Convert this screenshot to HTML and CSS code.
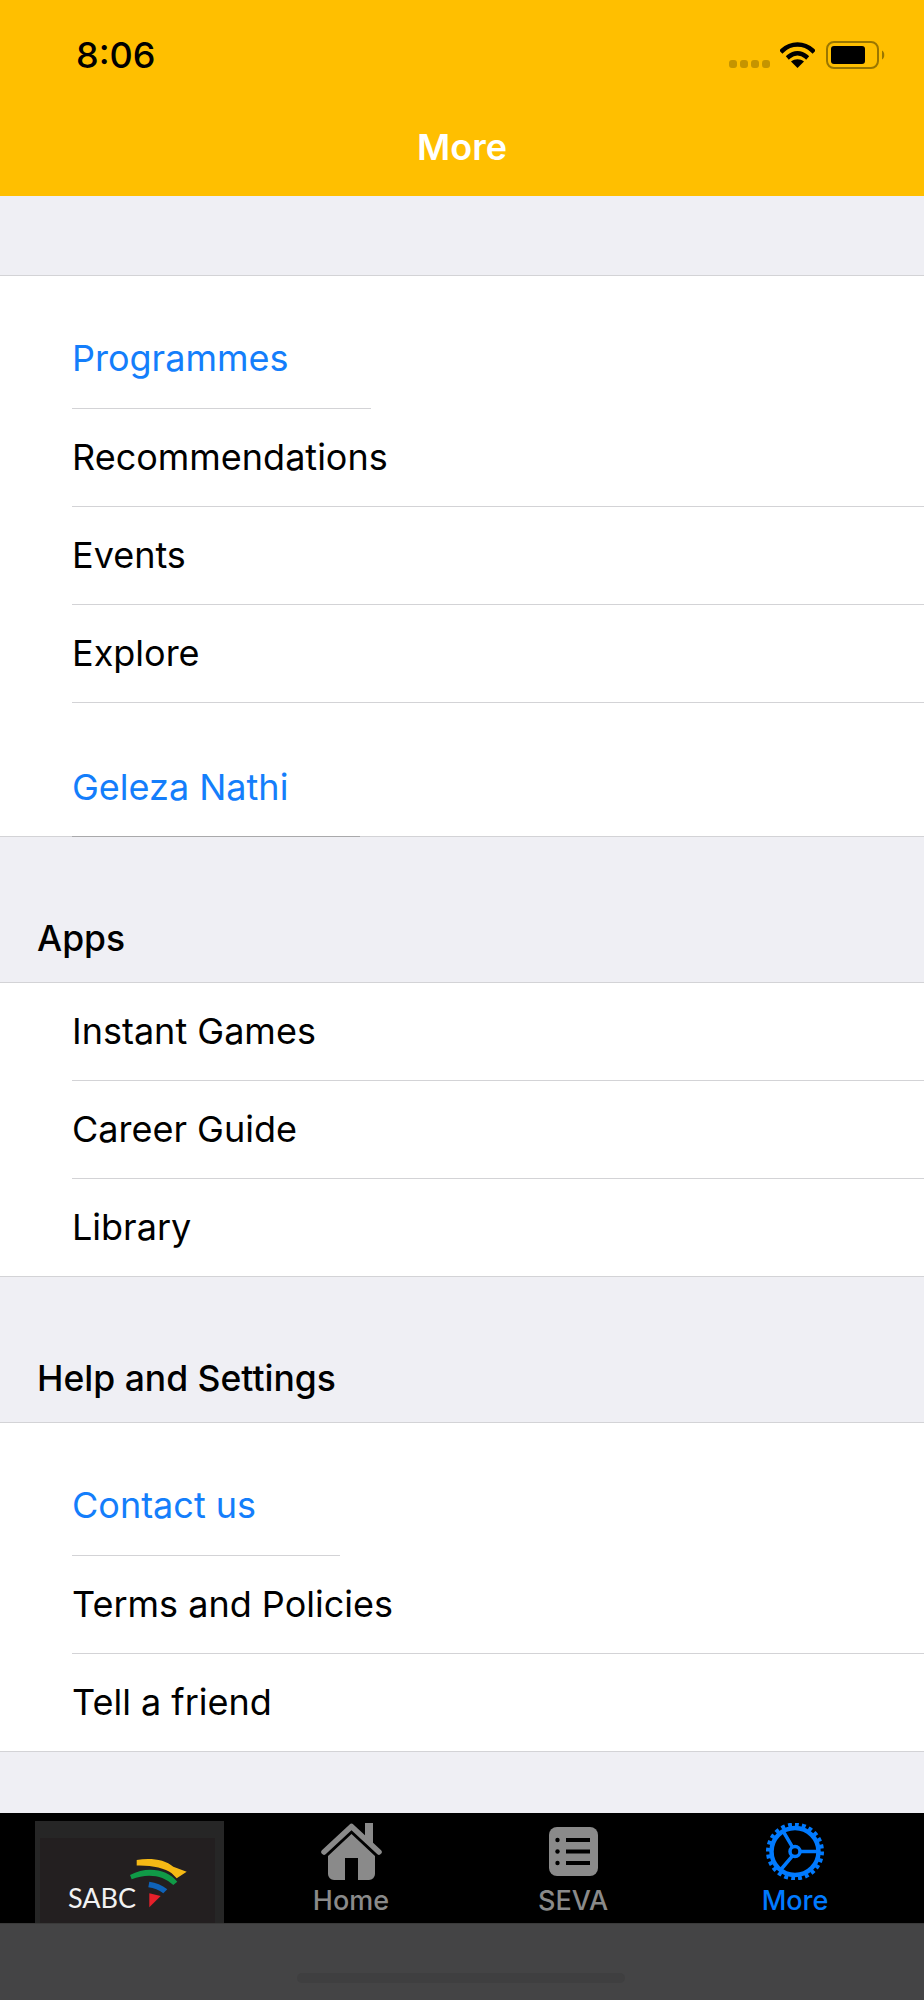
FILE: index.html
```html
<!DOCTYPE html>
<html lang="en">
<head>
<meta charset="utf-8">
<title>More</title>
<link rel="stylesheet" href="styles.css">
</head>
<body>
<div class="screen">
  <header class="header">
    <div class="status">
      <span class="time">8:06</span>
      <div class="status-icons">
        <div class="signal"><i></i><i></i><i></i><i></i></div>
        <svg class="wifi" viewBox="0 0 35 27" width="35" height="27"><path d="M2.5 9.5C11 1.5 24 1.5 32.500 9.500" fill="none" stroke="#000" stroke-width="4.500" stroke-linecap="square"/><path d="M9 15.500C14 11 21 11 26 15.500" fill="none" stroke="#000" stroke-width="4.500" stroke-linecap="square"/><path d="M17.500 27L11 20.500C15 17.500 20 17.500 24 20.500Z" fill="#000"/></svg>
        <svg class="battery" viewBox="0 0 60 28" width="60" height="28"><rect x="1" y="1" width="51" height="26" rx="7" fill="none" stroke="#9a7600" stroke-width="2"/><rect x="5" y="5" width="34" height="18" rx="3" fill="#000"/><path d="M56 9.500C59 11 59 17 56 18.500Z" fill="#9a7600"/></svg>
      </div>
    </div>
    <h1 class="title">More</h1>
  </header>

  <main class="content">
    <section class="group group-first">
      <a class="row link row-gap sep-programmes"><span>Programmes</span></a>
      <a class="row"><span>Recommendations</span></a>
      <a class="row"><span>Events</span></a>
      <a class="row"><span>Explore</span></a>
      <a class="row link row-gap sep-geleza"><span>Geleza Nathi</span></a>
    </section>

    <h2 class="section-title">Apps</h2>
    <section class="group">
      <a class="row"><span>Instant Games</span></a>
      <a class="row"><span>Career Guide</span></a>
      <a class="row row-last"><span>Library</span></a>
    </section>

    <h2 class="section-title">Help and Settings</h2>
    <section class="group">
      <a class="row link row-gap sep-contact"><span>Contact us</span></a>
      <a class="row"><span>Terms and Policies</span></a>
      <a class="row row-last"><span>Tell a friend</span></a>
    </section>
  </main>

  <nav class="tabbar">
    <div class="logo">
      <svg viewBox="0 0 189 102" width="189" height="102">
        <rect class="logo-inner" x="5" y="17" width="175" height="85"/>
        <text class="logo-text" x="33" y="86.500">SABC</text>
        <path d="M101.700 39C114 36.500 130 38 138.300 45.700L151.700 50.700L141.700 57.300L136.700 52.300C130 47 116 44 101.700 44.500Z" fill="#f5b915"/>
        <path d="M95 54C112 45 132 48 142.300 60.700L138.300 64C128 54 112 52 96.700 58.300Z" fill="#109a47"/>
        <path d="M114.300 60.700C121 61.500 127 64 132.300 68.300L128.300 72.300C124 69 119 67 113.300 66.300Z" fill="#0f62b8"/>
        <path d="M114.300 72.300L125.700 75L114.300 86.300Z" fill="#e6202a"/>
      </svg>
    </div>
    <a class="tab">
      <svg class="tab-icon" viewBox="0 0 61 57" width="61" height="57"><path d="M44 0h8v20h-8z" fill="#8a8a8a"/><path d="M3 29L30.500 3.500L58 29" fill="none" stroke="#8a8a8a" stroke-width="5.500" stroke-linecap="round" stroke-linejoin="round"/><path d="M30.500 11L54 33V51a6 6 0 0 1-6 6H37V35H24V57H13a6 6 0 0 1-6-6V33Z" fill="#8a8a8a"/></svg>
      <span>Home</span>
    </a>
    <a class="tab">
      <svg class="tab-icon" viewBox="0 0 61 57" width="61" height="57"><rect x="6" y="4" width="49" height="49" rx="8" fill="#8a8a8a"/><path d="M23 17H47M23 28.500H47M23 40H47" stroke="#000" stroke-width="4"/><circle cx="14.500" cy="17" r="2.200" fill="#000"/><circle cx="14.500" cy="28.500" r="2.200" fill="#000"/><circle cx="14.500" cy="40" r="2.200" fill="#000"/></svg>
      <span>SEVA</span>
    </a>
    <a class="tab tab-active">
      <svg class="tab-icon" viewBox="0 0 61 57" width="61" height="57">
        <g fill="none" stroke="#007aff">
          <circle cx="30" cy="28.500" r="23.500" stroke-width="4.500"/>
          <circle cx="30" cy="28.500" r="27" stroke-width="4" pathLength="24" stroke-dasharray="0.550 0.450"/>
          <circle cx="30" cy="28.500" r="5" stroke-width="3.500"/>
          <path d="M35 28.500H52M27.500 24.200L18 8M27.500 32.800L15.500 47" stroke-width="3.500"/>
        </g>
      </svg>
      <span>More</span>
    </a>
  </nav>

  <footer class="home-area"><div class="home-indicator"></div></footer>
</div>
</body>
</html>
```

FILE: styles.css
```css
* { box-sizing: border-box; }
html, body { margin: 0; padding: 0; }
body { font-family: Inter, "Liberation Sans", sans-serif; background: #efeff4; }
.screen { width: 924px; height: 2000px; display: flex; flex-direction: column; overflow: hidden; }

.header { height: 196px; background: #ffbf00; flex: none; }
.status { height: 110px; padding: 0 38px 0 76px; display: flex; justify-content: space-between; align-items: flex-start; }
.time { margin-top: 33px; font-size: 36px; line-height: 44px; font-weight: 500; color: #000; }
.status-icons { display: flex; align-items: flex-start; margin-top: 41px; }
.signal { display: flex; gap: 3px; margin-top: 19px; margin-right: 10px; }
.signal i { display: block; width: 8px; height: 8px; border-radius: 3px; background: #c59400; }
.wifi { margin-right: 11px; }
.title { margin: 0; font-size: 36px; line-height: 44px; font-weight: 600; color: #fff; text-align: center; margin-top: 15px; }

.content { flex: 1; }
.group { background: #fff; border-top: 1px solid #d3d3d6; border-bottom: 1px solid #d3d3d6; }
.group-first { margin-top: 79px; }
.row { display: block; height: 98px; margin-left: 72px; border-bottom: 1px solid #d3d3d6; font-size: 36px; line-height: 96px; color: #000; }
.row-last { border-bottom: none; height: 97px; }
.row.link { color: #147efb; }
.row-gap { height: 133px; padding-top: 34px; }
.sep-programmes { width: 299px; }
.row.sep-geleza { width: 288px; border-bottom: none; box-shadow: 0 1px 0 #a9a9ab; padding-top: 36px; }
.sep-contact { width: 268px; }

.section-title { margin: 0; height: 145px; padding: 80px 0 0 37px; font-size: 35.500px; line-height: 44px; font-weight: 500; color: #000; }

.tabbar { height: 110px; flex: none; background: #000; display: flex; padding: 0 18px; }
.logo { width: 222px; padding: 8px 0 0 17px; }
.logo svg { display: block; background: #262626; }
.logo-inner { fill: #231f20; }
.logo-text { font-family: Lato, "Liberation Sans", sans-serif; font-size: 27px; fill: #f2f2f2; }
.tab { width: 222px; display: flex; flex-direction: column; align-items: center; padding-top: 10px; font-size: 27px; line-height: 32px; font-weight: 500; color: #8a8a8a; }
.tab-icon { display: block; margin-bottom: 5px; }
.tab-active { color: #007aff; }

.home-area { height: 77px; flex: none; background: #444445; border-top: 1px solid #3a3a3a; padding: 49px 0 0 297px; }
.home-indicator { width: 328px; height: 10px; border-radius: 5px; background: #3f3f40; }
```
